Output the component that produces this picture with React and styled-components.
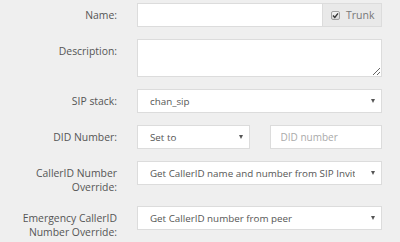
import React from "react";
import styled, { createGlobalStyle } from "styled-components";

const GlobalStyle = createGlobalStyle`
  html, body {
    margin: 0;
    padding: 0;
    background: #efefef;
  }
  body {
    font-family: "Open Sans", "Liberation Sans", sans-serif;
    font-size: 10.4px;
    color: #555;
  }
`;

const Form = styled.form`
  display: grid;
  grid-template-columns: 117px 245px;
  column-gap: 20px;
  row-gap: 12px;
  padding: 3px 18px 0 0;
  width: 400px;
  box-sizing: border-box;
`;

const Label = styled.label`
  text-align: right;
  padding-top: 5px;
  line-height: 14px;
  color: #555;
`;

const Control = styled.div`
  display: ${({ $split }) => ($split ? "grid" : "block")};
  grid-template-columns: 1fr 1fr;
  column-gap: 20px;
`;

const Group = styled.div`
  display: flex;
  height: 24px;
`;

const TextInput = styled.input`
  box-sizing: border-box;
  width: 100%;
  height: 24px;
  margin: 0;
  border: 1px solid #dcdcdc;
  background: #fff;
  padding: 0 10px;
  font: inherit;
  font-size: 10px;
  color: #555;
  outline: none;
  &::placeholder {
    color: #aaa;
  }
`;

const Addon = styled.span`
  display: flex;
  align-items: center;
  gap: 6px;
  box-sizing: border-box;
  flex: 0 0 59px;
  height: 24px;
  padding-left: 8px;
  border: 1px solid #dcdcdc;
  border-left: none;
  background: #e9e9e9;
  color: #777;
  font-size: 10.5px;
`;

const Check = styled.span`
  width: 9px;
  height: 9px;
  box-sizing: border-box;
  border: 1px solid #a0a0a0;
  border-radius: 2px;
  background: linear-gradient(#f4f4f4, #d8d8d8);
  display: flex;
  align-items: center;
  justify-content: center;
`;

const TextArea = styled.textarea`
  display: block;
  box-sizing: border-box;
  width: 100%;
  height: 38px;
  margin: 0;
  border: 1px solid #dcdcdc;
  background: #fff;
  font: inherit;
  color: #555;
  outline: none;
`;

const SelectBox = styled.div`
  display: flex;
  align-items: center;
  box-sizing: border-box;
  height: 24px;
  border: 1px solid #dcdcdc;
  background: #fff;
  padding: 0 6px 0 12px;
  color: #555;
  font-size: 9.8px;
`;

const Value = styled.span`
  flex: 1;
  min-width: 0;
  overflow: hidden;
  white-space: nowrap;
  margin-right: 16px;
`;

const Caret = styled.span`
  width: 0;
  height: 0;
  border-left: 2.5px solid transparent;
  border-right: 2.5px solid transparent;
  border-top: 4px solid #555;
`;

const Dropdown = ({ value }) => (
  <SelectBox role="combobox">
    <Value>{value}</Value>
    <Caret />
  </SelectBox>
);

export default function App() {
  return (
    <>
      <GlobalStyle />
      <Form>
        <Label>Name:</Label>
        <Control>
          <Group>
            <TextInput />
            <Addon>
              <Check>
                <svg width="7" height="7" viewBox="0 0 7 7">
                  <path d="M1 3.6 L2.8 5.4 L6 1.4" fill="none" stroke="#333" strokeWidth="1.4" />
                </svg>
              </Check>
              Trunk
            </Addon>
          </Group>
        </Control>

        <Label>Description:</Label>
        <Control>
          <TextArea />
        </Control>

        <Label>SIP stack:</Label>
        <Control>
          <Dropdown value="chan_sip" />
        </Control>

        <Label>DID Number:</Label>
        <Control $split>
          <Dropdown value="Set to" />
          <TextInput placeholder="DID number" />
        </Control>

        <Label>
          CallerID Number
          <br />
          Override:
        </Label>
        <Control>
          <Dropdown value="Get CallerID name and number from SIP Invite" />
        </Control>

        <Label>
          Emergency CallerID
          <br />
          Number Override:
        </Label>
        <Control>
          <Dropdown value="Get CallerID number from peer" />
        </Control>
      </Form>
    </>
  );
}
